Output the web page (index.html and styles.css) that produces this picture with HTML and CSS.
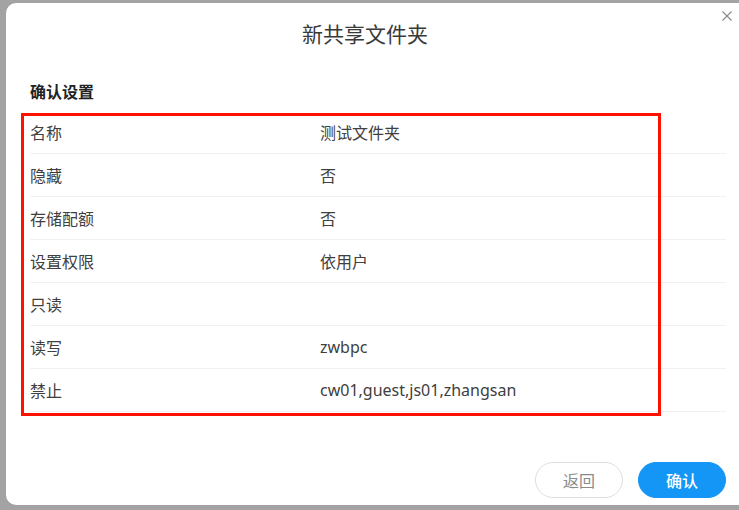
FILE: index.html
```html
<!DOCTYPE html>
<html lang="zh-CN">
<head>
<meta charset="utf-8">
<title>新共享文件夹</title>
<link rel="stylesheet" href="styles.css">
</head>
<body>
<div class="dialog">
  <div class="header"><h2 class="title">新共享文件夹</h2></div>
  <button class="close" aria-label="关闭">
    <svg width="10" height="10" viewBox="0 0 10 10"><path d="M0.5 0.5L9.5 9.5M9.5 0.5L0.5 9.5" stroke="#8a8a8a" stroke-width="1.1" fill="none"/></svg>
  </button>
  <div class="section-title">确认设置</div>
  <div class="rows">
    <div class="row"><span class="label">名称</span><span class="value">测试文件夹</span></div>
    <div class="row"><span class="label">隐藏</span><span class="value">否</span></div>
    <div class="row"><span class="label">存储配额</span><span class="value">否</span></div>
    <div class="row"><span class="label">设置权限</span><span class="value">依用户</span></div>
    <div class="row"><span class="label">只读</span><span class="value"></span></div>
    <div class="row"><span class="label">读写</span><span class="value">zwbpc</span></div>
    <div class="row"><span class="label">禁止</span><span class="value">cw01,guest,js01,zhangsan</span></div>
  </div>
  <div class="footer">
    <button class="btn btn-back">返回</button>
    <button class="btn btn-ok">确认</button>
  </div>
  <div class="highlight"></div>
</div>
</body>
</html>
```
FILE: styles.css
```css
html, body {
  margin: 0;
  padding: 0;
  width: 739px;
  height: 510px;
  overflow: hidden;
  background: #a3a3a3;
  font-family: "Noto Sans", "Noto Sans CJK SC", sans-serif;
}
.dialog {
  position: relative;
  box-sizing: border-box;
  margin: 3px 0 0 6px;
  width: 750px;
  height: 502px;
  background: #fff;
  border-radius: 10px;
  padding: 0 30px 0 24px;
}
.header {
  height: 62px;
  display: flex;
  align-items: center;
  justify-content: center;
  padding-right: 26px;
}
.title {
  margin: 0;
  font-size: 21px;
  font-weight: 400;
  color: #3a3a3a;
  line-height: 30px;
}
.close {
  position: absolute;
  top: 8px;
  right: 24px;
  width: 10px;
  height: 10px;
  padding: 0;
  border: 0;
  background: none;
  display: flex;
}
.section-title {
  margin: 15px 0 7px;
  font-size: 16px;
  line-height: 24px;
  font-weight: 700;
  color: #222;
}
.rows {
  display: flex;
  flex-direction: column;
}
.row {
  display: grid;
  grid-template-columns: 290px 1fr;
  align-items: center;
  height: 42px;
  border-bottom: 1px solid #f0f0f0;
  font-size: 16px;
  color: #404040;
}
.footer {
  display: flex;
  justify-content: flex-end;
  gap: 15px;
  margin-top: 50px;
}
.btn {
  width: 88px;
  height: 36px;
  border-radius: 18px;
  font-family: "Noto Sans", "Noto Sans CJK SC", sans-serif;
  font-size: 16px;
  cursor: pointer;
}
.btn-back {
  background: #fff;
  border: 1px solid #dedede;
  color: #8a8a8a;
}
.btn-ok {
  background: #1396f5;
  border: 1px solid #1396f5;
  color: #fff;
  font-weight: 500;
}
.highlight {
  position: absolute;
  left: 15px;
  top: 110px;
  width: 640px;
  height: 303px;
  box-sizing: border-box;
  border: 3px solid #ff1100;
  pointer-events: none;
}
```
